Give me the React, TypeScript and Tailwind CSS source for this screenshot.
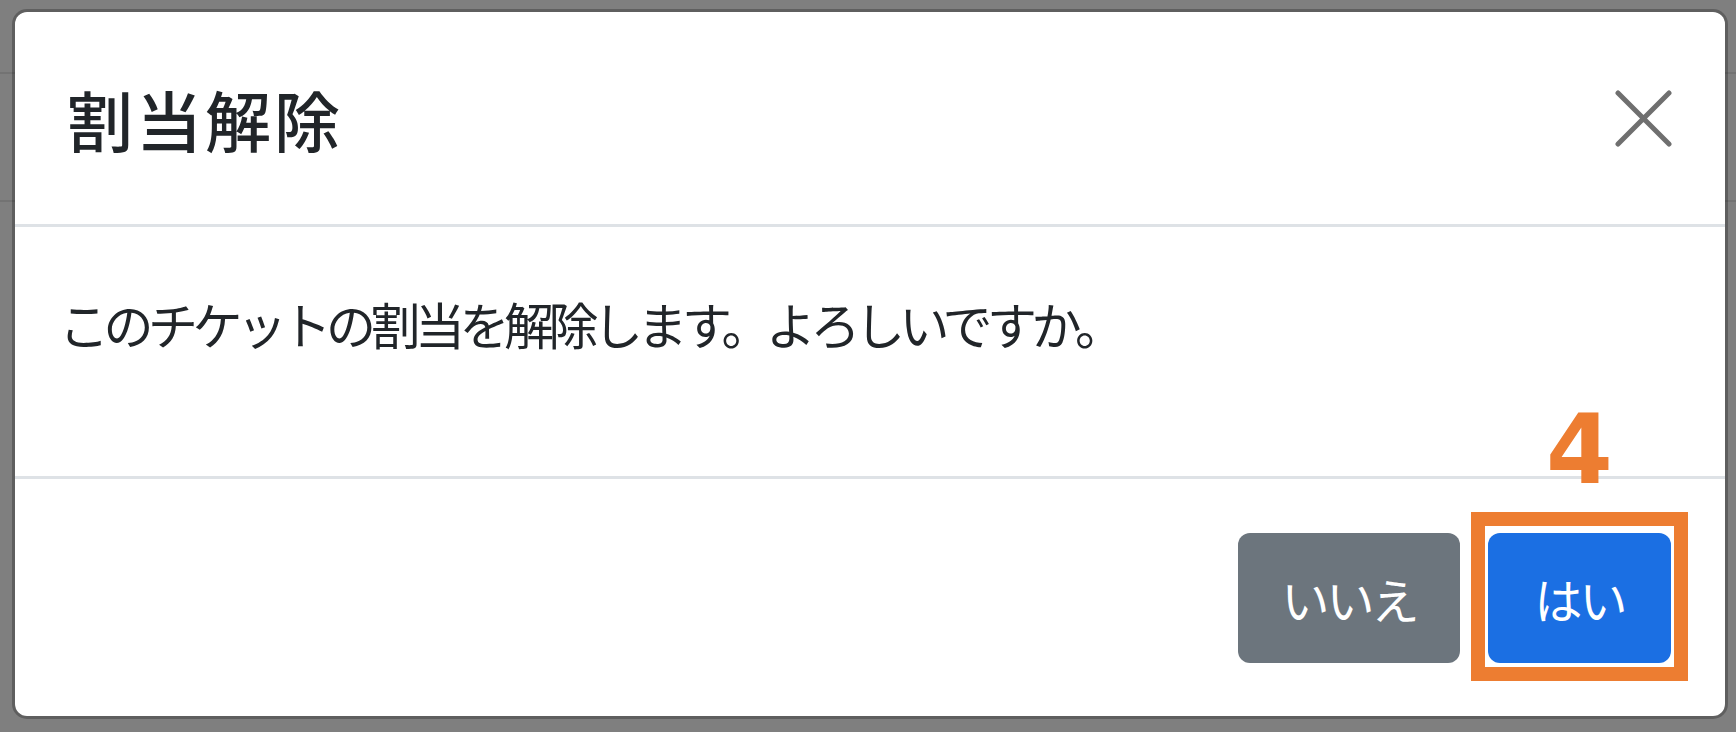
import React from 'react';

const jp = { fontFamily: '"Noto Sans CJK JP", "Noto Sans", sans-serif' };

function CloseIcon() {
  return (
    <svg width="57" height="57" viewBox="0 0 57 57" fill="none">
      <path d="M3 3 L54 54 M54 3 L3 54" stroke="#6f6f6f" strokeWidth="5" strokeLinecap="round" />
    </svg>
  );
}

export default function App() {
  return (
    <div
      className="w-[1736px] h-[732px] overflow-hidden bg-[#7f7f7f] bg-[linear-gradient(to_bottom,transparent_72px,#737373_72px,#737373_74px,transparent_74px,transparent_200px,#737373_200px,#737373_202px,transparent_202px)] pt-[9px] pl-[12px]"
      style={jp}
    >
      <div className="w-[1716px] rounded-[15px] border-[3px] border-black/25 bg-white bg-clip-padding">
        <div className="flex h-[215px] items-center justify-between border-b-[3px] border-[#dee2e6] pl-[52px] pr-[53px]">
          <h5 className="text-[66px] font-medium leading-none tracking-[3px] text-[#212529]">割当解除</h5>
          <button className="flex items-center justify-center">
            <CloseIcon />
          </button>
        </div>

        <div className="h-[249px] pl-[44px] pt-[56px]">
          <p className="text-[50px] leading-[80px] tracking-[-5.5px] text-[#212529]">
            このチケットの割当を解除します。よろしいですか。
          </p>
        </div>

        <div className="flex h-[240px] items-center justify-end gap-[28px] border-t-[3px] border-[#dee2e6] pr-[54px]">
          <button className="flex h-[130px] w-[222px] items-center justify-center rounded-[12px] bg-[#6c757d] text-[48px] tracking-[-3px] text-white">
            いいえ
          </button>
          <div className="relative">
            <button className="flex h-[130px] w-[183px] items-center justify-center rounded-[12px] bg-[#1b6fe3] text-[48px] tracking-[-3px] text-white">
              はい
            </button>
            {/* annotation overlay */}
            <div className="absolute -left-[17px] -right-[17px] -top-[21px] -bottom-[18px] border-[14px] border-[#ed7d31]" />
            <span
              className="absolute -top-[131px] left-1/2 -translate-x-1/2 text-[96px] font-bold leading-none text-[#ed7d31]"
              style={{ fontFamily: '"DejaVu Sans", "Liberation Sans", sans-serif' }}
            >
              4
            </span>
          </div>
        </div>
      </div>
    </div>
  );
}
